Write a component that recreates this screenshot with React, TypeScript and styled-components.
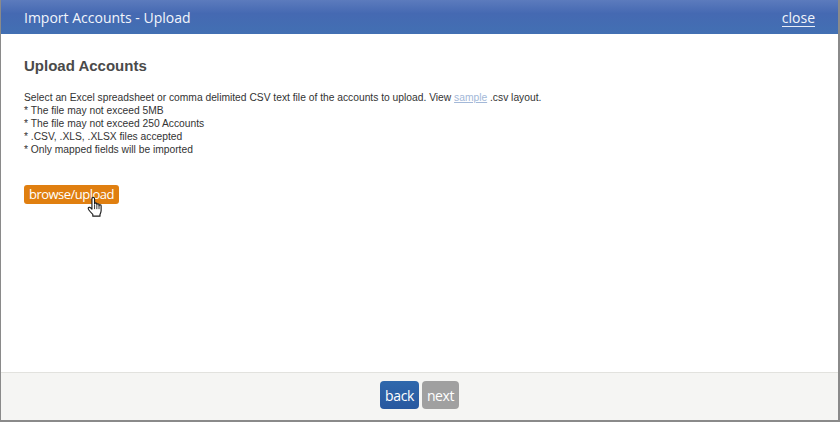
import styled, { createGlobalStyle } from 'styled-components';

const GlobalStyle = createGlobalStyle`
  html, body {
    margin: 0;
    padding: 0;
    background: #8a8a8a;
    font-family: "Liberation Sans", Arial, sans-serif;
  }
`;

const rules = [
  '* The file may not exceed 5MB',
  '* The file may not exceed 250 Accounts',
  '* .CSV, .XLS, .XLSX files accepted',
  '* Only mapped fields will be imported',
];

const HandCursor = () => (
  <S.Cursor width="16" height="21" viewBox="0 0 18 24">
    <path
      d="M5.500 14V3c0-2 3-2 3 0v6c0-1.600 2.600-1.600 2.600 0v1c0-1.500 2.500-1.500 2.500 0v1c0-1.400 2.400-1.400 2.400 0v5.500c0 2-.6 3-1.300 4.500v2H6.500v-2C5 19.500 3.500 18 2 16c-1.500-2-.5-3.600 1-3 .8.300 1.700 1 2.500 2z"
      fill="#fff"
      stroke="#1c1c1c"
      strokeWidth="1.300"
      strokeLinejoin="round"
    />
    <path d="M8.500 10v5M11.100 10.500V15M13.600 11v4" fill="none" stroke="#1c1c1c" strokeWidth="1" />
  </S.Cursor>
);

const App = () => {
  return (
    <S.Page>
      <GlobalStyle />
      <S.Modal>
        <S.Header>
          <S.Title>Import Accounts - Upload</S.Title>
          <S.Close href="#">close</S.Close>
        </S.Header>
        <S.Body>
          <S.Heading>Upload Accounts</S.Heading>
          <S.Text>
            Select an Excel spreadsheet or comma delimited CSV text file of the accounts to upload. View{' '}
            <S.SampleLink href="#">sample</S.SampleLink> .csv layout.
          </S.Text>
          {rules.map((rule) => (
            <S.Text key={rule}>{rule}</S.Text>
          ))}
          <S.UploadWrap>
            <S.UploadButton>browse/upload</S.UploadButton>
            <HandCursor />
          </S.UploadWrap>
        </S.Body>
        <S.Footer>
          <S.NavButton $primary>back</S.NavButton>
          <S.NavButton>next</S.NavButton>
        </S.Footer>
      </S.Modal>
    </S.Page>
  );
};

export default App;

const S = {
  Page: styled.div`
    width: 840px;
    height: 422px;
    padding: 0 2px 2px 1px;
    box-sizing: border-box;
    overflow: hidden;
  `,
  Modal: styled.div`
    height: 100%;
    display: flex;
    flex-direction: column;
    background: #fff;
  `,
  Header: styled.div`
    height: 34px;
    flex: none;
    box-sizing: border-box;
    padding: 0 23px 0 23px;
    display: flex;
    align-items: center;
    justify-content: space-between;
    background: linear-gradient(#5c7bbd 0%, #4569b2 40%, #4270b3 100%);
    color: #f2f5fb;
  `,
  Title: styled.div`
    font-family: "Open Sans", sans-serif;
    font-size: 14px;
  `,
  Close: styled.a`
    font-family: "Open Sans", sans-serif;
    font-size: 14px;
    color: #f2f5fb;
    text-decoration: none;
    border-bottom: 1px solid #e8edf7;
    line-height: 17px;
    margin-top: 1px;
  `,
  Body: styled.div`
    flex: 1;
    padding: 22px 0 0 23px;
  `,
  Heading: styled.h2`
    margin: 0 0 15px;
    font-size: 15px;
    line-height: 20px;
    font-weight: 700;
    color: #4a4a4a;
  `,
  Text: styled.div`
    font-size: 10.280px;
    line-height: 13px;
    color: #333;
  `,
  SampleLink: styled.a`
    color: #a3b8d8;
    text-decoration: underline;
  `,
  UploadWrap: styled.div`
    position: relative;
    width: 95px;
    margin-top: 29px;
  `,
  UploadButton: styled.button`
    display: block;
    width: 95px;
    height: 19px;
    padding: 0;
    border: 0;
    border-radius: 3px;
    background: #e07f10;
    color: #fff;
    font-family: "Open Sans", sans-serif;
    font-size: 13px;
    line-height: 19px;
    letter-spacing: -0.5px;
  `,
  Cursor: styled.svg`
    position: absolute;
    left: 63px;
    top: 11px;
  `,
  Footer: styled.div`
    height: 48px;
    flex: none;
    box-sizing: border-box;
    padding-top: 8px;
    display: flex;
    justify-content: center;
    gap: 3px;
    background: #f5f5f3;
    border-top: 1px solid #e2e2de;
  `,
  NavButton: styled.button<{ $primary?: boolean }>`
    width: ${(p) => (p.$primary ? '39px' : '37px')};
    height: 28px;
    padding: 0;
    border: 0;
    border-radius: 4px;
    background: ${(p) => (p.$primary ? 'linear-gradient(#2f68ac, #28589f)' : '#a0a0a0')};
    color: #fff;
    font-family: "Open Sans", sans-serif;
    font-size: 14px;
    letter-spacing: -0.4px;
  `,
};
